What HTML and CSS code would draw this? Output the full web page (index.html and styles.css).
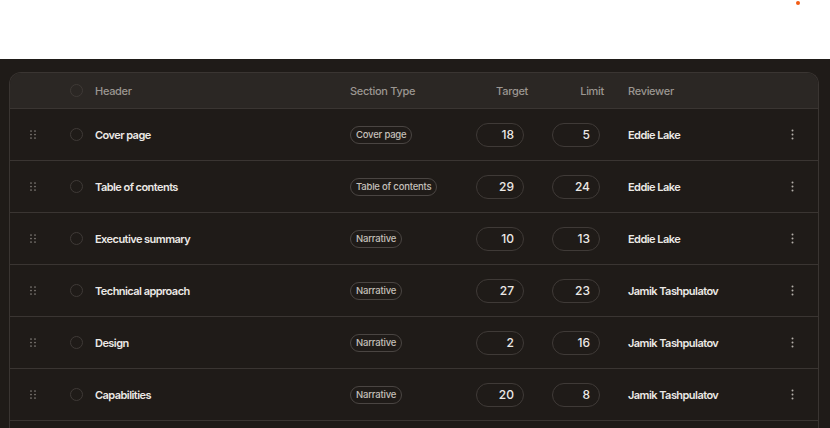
FILE: index.html
```html
<!DOCTYPE html>
<html lang="en">
<head>
<meta charset="utf-8">
<title>Sections</title>
<link rel="stylesheet" href="styles.css">
</head>
<body>
<div class="topbar"><span class="dot"></span></div>
<main class="stage">
  <div class="table">
    <div class="row head">
      <div class="c-handle"></div>
      <div class="c-check"><span class="circle"></span></div>
      <div class="c-name">Header</div>
      <div class="c-type">Section Type</div>
      <div class="c-num">Target</div>
      <div class="c-num">Limit</div>
      <div class="c-rev">Reviewer</div>
      <div class="c-menu"></div>
    </div>

    <div class="row">
      <div class="c-handle"><svg class="grip" viewBox="0 0 6 9"><circle cx="1" cy="1" r=".85"/><circle cx="5" cy="1" r=".85"/><circle cx="1" cy="4.5" r=".85"/><circle cx="5" cy="4.5" r=".85"/><circle cx="1" cy="8" r=".85"/><circle cx="5" cy="8" r=".85"/></svg></div>
      <div class="c-check"><span class="circle"></span></div>
      <div class="c-name">Cover page</div>
      <div class="c-type"><span class="badge">Cover page</span></div>
      <div class="c-num"><span class="field">18</span></div>
      <div class="c-num"><span class="field">5</span></div>
      <div class="c-rev">Eddie Lake</div>
      <div class="c-menu"><svg class="kebab" viewBox="0 0 3 11"><circle cx="1.5" cy="1.5" r="1"/><circle cx="1.5" cy="5.5" r="1"/><circle cx="1.5" cy="9.5" r="1"/></svg></div>
    </div>

    <div class="row">
      <div class="c-handle"><svg class="grip" viewBox="0 0 6 9"><circle cx="1" cy="1" r=".85"/><circle cx="5" cy="1" r=".85"/><circle cx="1" cy="4.5" r=".85"/><circle cx="5" cy="4.5" r=".85"/><circle cx="1" cy="8" r=".85"/><circle cx="5" cy="8" r=".85"/></svg></div>
      <div class="c-check"><span class="circle"></span></div>
      <div class="c-name">Table of contents</div>
      <div class="c-type"><span class="badge">Table of contents</span></div>
      <div class="c-num"><span class="field">29</span></div>
      <div class="c-num"><span class="field">24</span></div>
      <div class="c-rev">Eddie Lake</div>
      <div class="c-menu"><svg class="kebab" viewBox="0 0 3 11"><circle cx="1.5" cy="1.5" r="1"/><circle cx="1.5" cy="5.5" r="1"/><circle cx="1.5" cy="9.5" r="1"/></svg></div>
    </div>

    <div class="row">
      <div class="c-handle"><svg class="grip" viewBox="0 0 6 9"><circle cx="1" cy="1" r=".85"/><circle cx="5" cy="1" r=".85"/><circle cx="1" cy="4.5" r=".85"/><circle cx="5" cy="4.5" r=".85"/><circle cx="1" cy="8" r=".85"/><circle cx="5" cy="8" r=".85"/></svg></div>
      <div class="c-check"><span class="circle"></span></div>
      <div class="c-name">Executive summary</div>
      <div class="c-type"><span class="badge">Narrative</span></div>
      <div class="c-num"><span class="field">10</span></div>
      <div class="c-num"><span class="field">13</span></div>
      <div class="c-rev">Eddie Lake</div>
      <div class="c-menu"><svg class="kebab" viewBox="0 0 3 11"><circle cx="1.5" cy="1.5" r="1"/><circle cx="1.5" cy="5.5" r="1"/><circle cx="1.5" cy="9.5" r="1"/></svg></div>
    </div>

    <div class="row">
      <div class="c-handle"><svg class="grip" viewBox="0 0 6 9"><circle cx="1" cy="1" r=".85"/><circle cx="5" cy="1" r=".85"/><circle cx="1" cy="4.5" r=".85"/><circle cx="5" cy="4.5" r=".85"/><circle cx="1" cy="8" r=".85"/><circle cx="5" cy="8" r=".85"/></svg></div>
      <div class="c-check"><span class="circle"></span></div>
      <div class="c-name">Technical approach</div>
      <div class="c-type"><span class="badge">Narrative</span></div>
      <div class="c-num"><span class="field">27</span></div>
      <div class="c-num"><span class="field">23</span></div>
      <div class="c-rev">Jamik Tashpulatov</div>
      <div class="c-menu"><svg class="kebab" viewBox="0 0 3 11"><circle cx="1.5" cy="1.5" r="1"/><circle cx="1.5" cy="5.5" r="1"/><circle cx="1.5" cy="9.5" r="1"/></svg></div>
    </div>

    <div class="row">
      <div class="c-handle"><svg class="grip" viewBox="0 0 6 9"><circle cx="1" cy="1" r=".85"/><circle cx="5" cy="1" r=".85"/><circle cx="1" cy="4.5" r=".85"/><circle cx="5" cy="4.5" r=".85"/><circle cx="1" cy="8" r=".85"/><circle cx="5" cy="8" r=".85"/></svg></div>
      <div class="c-check"><span class="circle"></span></div>
      <div class="c-name">Design</div>
      <div class="c-type"><span class="badge">Narrative</span></div>
      <div class="c-num"><span class="field">2</span></div>
      <div class="c-num"><span class="field">16</span></div>
      <div class="c-rev">Jamik Tashpulatov</div>
      <div class="c-menu"><svg class="kebab" viewBox="0 0 3 11"><circle cx="1.5" cy="1.5" r="1"/><circle cx="1.5" cy="5.5" r="1"/><circle cx="1.5" cy="9.5" r="1"/></svg></div>
    </div>

    <div class="row">
      <div class="c-handle"><svg class="grip" viewBox="0 0 6 9"><circle cx="1" cy="1" r=".85"/><circle cx="5" cy="1" r=".85"/><circle cx="1" cy="4.5" r=".85"/><circle cx="5" cy="4.5" r=".85"/><circle cx="1" cy="8" r=".85"/><circle cx="5" cy="8" r=".85"/></svg></div>
      <div class="c-check"><span class="circle"></span></div>
      <div class="c-name">Capabilities</div>
      <div class="c-type"><span class="badge">Narrative</span></div>
      <div class="c-num"><span class="field">20</span></div>
      <div class="c-num"><span class="field">8</span></div>
      <div class="c-rev">Jamik Tashpulatov</div>
      <div class="c-menu"><svg class="kebab" viewBox="0 0 3 11"><circle cx="1.5" cy="1.5" r="1"/><circle cx="1.5" cy="5.5" r="1"/><circle cx="1.5" cy="9.5" r="1"/></svg></div>
    </div>

    <div class="row">
      <div class="c-handle"></div>
      <div class="c-check"></div>
      <div class="c-name"></div>
      <div class="c-type"></div>
      <div class="c-num"></div>
      <div class="c-num"></div>
      <div class="c-rev"></div>
      <div class="c-menu"></div>
    </div>
  </div>
</main>
</body>
</html>
```

FILE: styles.css
```css
* { box-sizing: border-box; }
html, body { margin: 0; padding: 0; }
body {
  width: 830px;
  height: 428px;
  overflow: hidden;
  background: #1f1b18;
  font-family: Inter, "Noto Sans", "Liberation Sans", sans-serif;
  color: #ece9e6;
}
.topbar {
  height: 59px;
  background: #ffffff;
  display: flex;
  justify-content: flex-end;
  align-items: flex-start;
  padding: 1px 30px 0 0;
}
.dot {
  width: 4px;
  height: 4px;
  border-radius: 50%;
  background: #f25c14;
}
.stage {
  padding: 13px 11px 0 9px;
}
.table {
  border: 1px solid #3a3532;
  border-bottom: none;
  border-radius: 12px 12px 0 0;
  overflow: hidden;
}
.row {
  display: grid;
  grid-template-columns: 46px 39px 255px 126px 76px 76px 152px 1fr;
  align-items: center;
  height: 52px;
  border-top: 1px solid #3a3532;
  font-size: 11px;
  font-weight: 600;
  letter-spacing: -0.55px;
}
.row.head {
  height: 35px;
  border-top: none;
  background: #2b2724;
  font-weight: 500;
  color: #9b9691;
  letter-spacing: -0.3px;
}
.c-handle { display: flex; justify-content: center; }
.grip { width: 6px; height: 9px; fill: #85807b; }
.c-check { padding-left: 14px; display: flex; }
.circle {
  width: 13px;
  height: 13px;
  border-radius: 50%;
  border: 1px solid #3f3a37;
}
.c-type { display: flex; }
.badge {
  display: inline-block;
  border: 1px solid #4a4542;
  border-radius: 9px;
  padding: 2px 5px 3px;
  font-size: 9.5px;
  font-weight: 500;
  color: #c5c0bb;
  letter-spacing: -0.2px;
  line-height: 11px;
}
.c-num { display: flex; }
.head .c-num { justify-content: flex-end; padding-right: 24px; }
.field {
  width: 48px;
  height: 24px;
  border: 1px solid #3f3a37;
  border-radius: 12px;
  display: flex;
  align-items: center;
  justify-content: flex-end;
  padding-right: 9px;
  font-size: 12px;
  font-weight: 500;
  letter-spacing: 0;
}
.c-menu { display: flex; justify-content: center; width: 24px; }
.kebab { width: 3px; height: 11px; fill: #b3aea9; }
```
